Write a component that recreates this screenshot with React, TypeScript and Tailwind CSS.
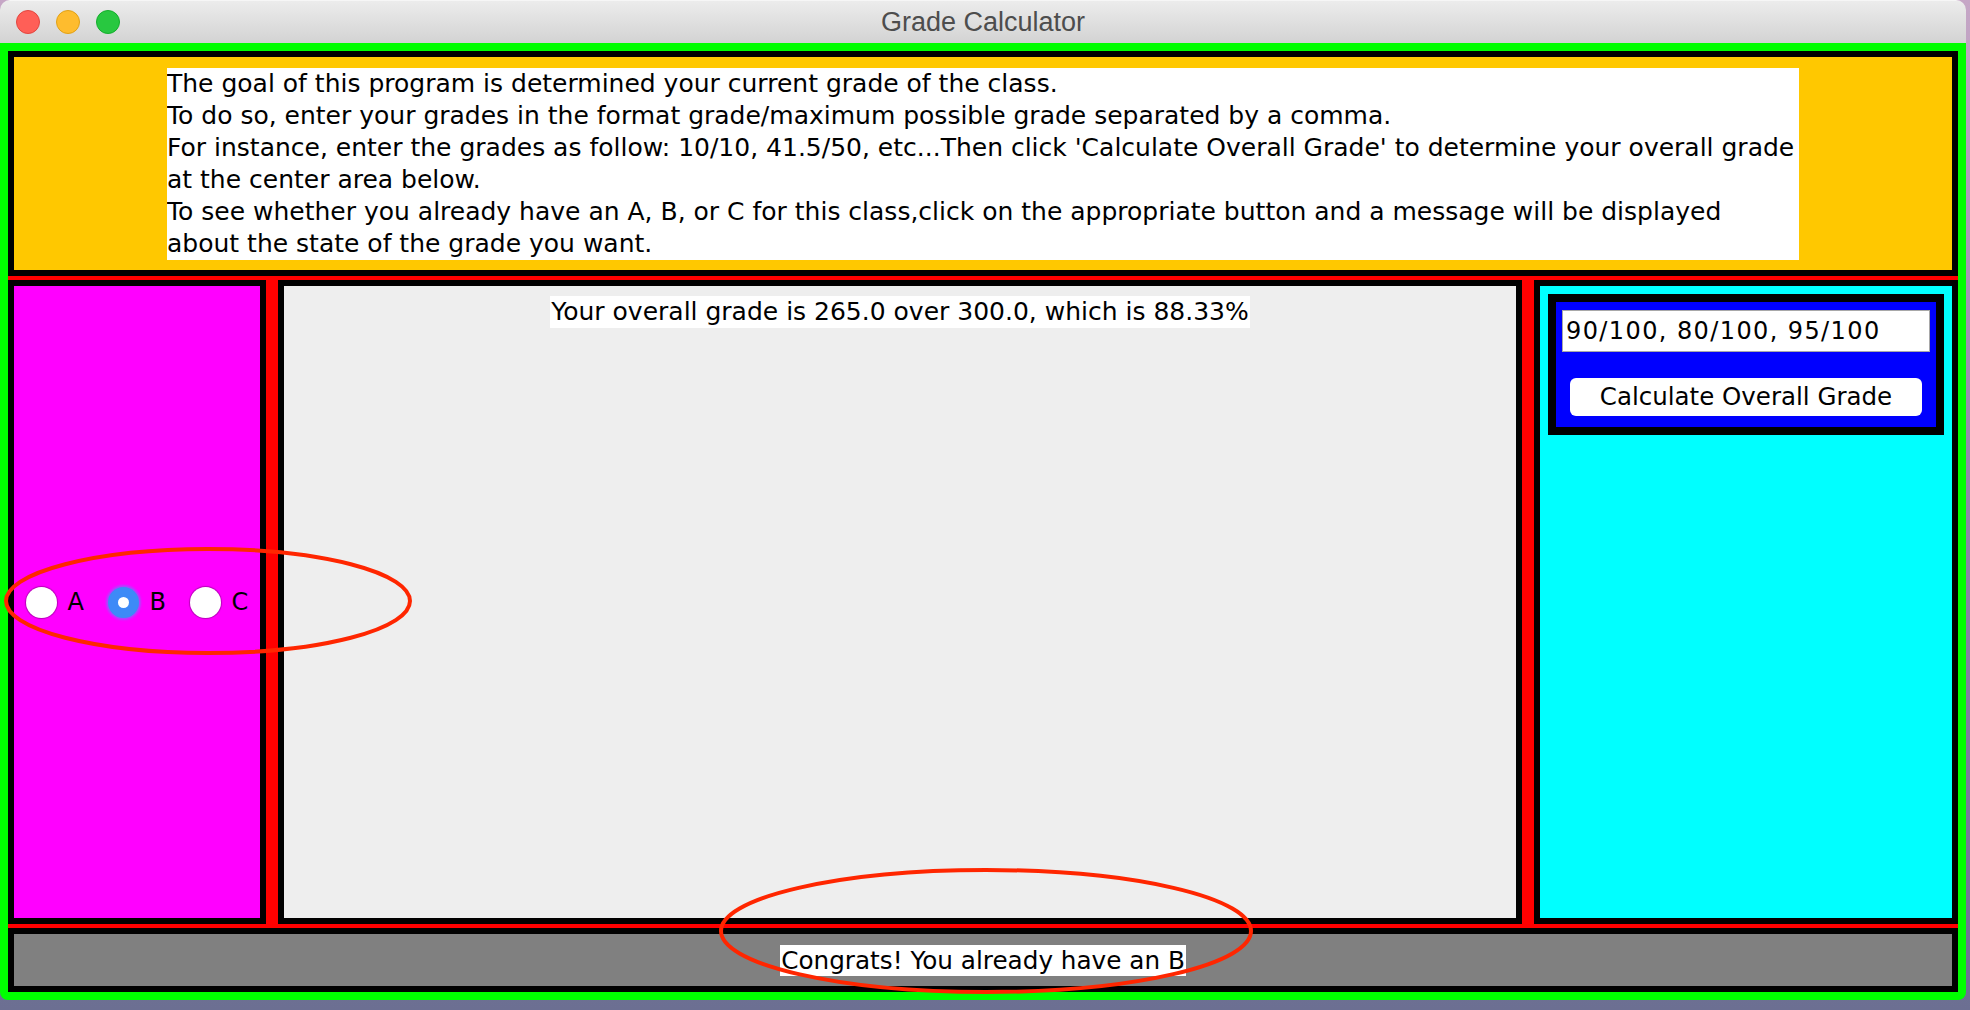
const Radio = ({ label, checked }: { label: string; checked?: boolean }) => {
    return (
        <div className="flex flex-row items-center w-[59px]">
            {checked ? (
                <span className="w-[31px] h-[31px] rounded-full bg-[#3d8af7] flex items-center justify-center shadow-[0_0_2px_2px_rgba(110,120,255,0.55)]">
                    <span className="w-[11px] h-[11px] rounded-full bg-white"></span>
                </span>
            ) : (
                <span className="w-[31px] h-[31px] rounded-full bg-white shadow-[0_0_1px_1px_rgba(0,0,0,0.28)]"></span>
            )}
            <span className="ml-[11px] text-[24px] leading-[28px] text-black">{label}</span>
        </div>
    )
}

const TitleBar = () => {
    return (
        <div className="flex flex-row items-center h-[43px] shrink-0 bg-gradient-to-b from-[#ececec] to-[#d3d3d3] border-t border-[#f6f6f6]">
            <div className="flex flex-row gap-[16px] pl-[16px] w-[120px]">
                <span className="w-[24px] h-[24px] rounded-full bg-[#ff5f57] border border-[#e2463f]"></span>
                <span className="w-[24px] h-[24px] rounded-full bg-[#febc2e] border border-[#e1a116]"></span>
                <span className="w-[24px] h-[24px] rounded-full bg-[#28c840] border border-[#14ae2c]"></span>
            </div>
            <div className="flex-1 text-center font-['Liberation_Sans',sans-serif] text-[27px] text-[#4d4d4d]">Grade Calculator</div>
            <div className="w-[120px]"></div>
        </div>
    )
}

const App = () => {
    return (
        <div className="relative w-[1970px] h-[1010px] overflow-hidden bg-gradient-to-b from-[#c6a6c6] via-[#8f86a8] to-[#6c6f92] font-['DejaVu_Sans',sans-serif]">
            <div className="flex flex-col w-[1966px] h-[1000px] rounded-t-[10px] rounded-b-[8px] overflow-hidden">
                <TitleBar />
                <div className="flex-1 min-h-0 bg-[#00ff00] p-[8px]">
                    <div className="flex flex-col h-full gap-[4px] bg-[#ff0000]">
                        {/* instructions */}
                        <div className="flex items-center justify-center h-[225px] shrink-0 border-[6px] border-black bg-[#ffc800]">
                            <div className="w-[1632px] bg-white text-black text-[25px] leading-[32px] whitespace-nowrap overflow-hidden">
                                <div>The goal of this program is determined your current grade of the class.</div>
                                <div>To do so, enter your grades in the format grade/maximum possible grade separated by a comma.</div>
                                <div>For instance, enter the grades as follow: 10/10, 41.5/50, etc...Then click 'Calculate Overall Grade' to determine your overall grade</div>
                                <div>at the center area below.</div>
                                <div>To see whether you already have an A, B, or C for this class,click on the appropriate button and a message will be displayed</div>
                                <div>about the state of the grade you want.</div>
                            </div>
                        </div>

                        <div className="flex flex-row flex-1 min-h-0 gap-[12px]">
                            <div className="flex flex-row items-center justify-center gap-[23px] w-[258px] border-[6px] border-black bg-[#ff00ff]">
                                <Radio label="A" />
                                <Radio label="B" checked />
                                <Radio label="C" />
                            </div>

                            <div className="flex flex-col items-center w-[1244px] pt-[10px] border-[6px] border-black bg-[#eeeeee]">
                                <div className="h-[32px] px-[1px] bg-white text-[25px] leading-[32px] text-black whitespace-nowrap">Your overall grade is 265.0 over 300.0, which is 88.33%</div>
                            </div>

                            <div className="flex-1 p-[8px] border-[6px] border-black bg-[#00ffff]">
                                <div className="flex flex-col h-[141px] px-[6px] pt-[8px] border-[8px] border-black bg-[#0000ff]">
                                    <input
                                        className="h-[42px] w-full pl-[3px] border border-[#a8a8a8] bg-white text-[24px] tracking-[1.4px] text-black outline-none"
                                        defaultValue="90/100, 80/100, 95/100"
                                        type="text"
                                    />
                                    <button className="mt-[26px] mx-[8px] h-[38px] rounded-[6px] bg-white text-[24.5px] text-black">Calculate Overall Grade</button>
                                </div>
                            </div>
                        </div>

                        <div className="flex items-center justify-center h-[64px] shrink-0 border-[6px] border-black bg-[#808080]">
                            <div className="h-[31px] px-[1px] bg-white text-[24.7px] leading-[31px] text-black whitespace-nowrap">Congrats! You already have an B</div>
                        </div>
                    </div>
                </div>
            </div>

            {/* hand-drawn annotation ellipses */}
            <svg className="absolute left-0 top-0 pointer-events-none" width="1970" height="1010">
                <ellipse cx="208" cy="601" rx="202" ry="52" fill="none" stroke="#ff2600" strokeWidth="4" />
                <ellipse cx="986" cy="931" rx="265" ry="61" fill="none" stroke="#ff2600" strokeWidth="4" />
            </svg>
        </div>
    )
}

export default App;
